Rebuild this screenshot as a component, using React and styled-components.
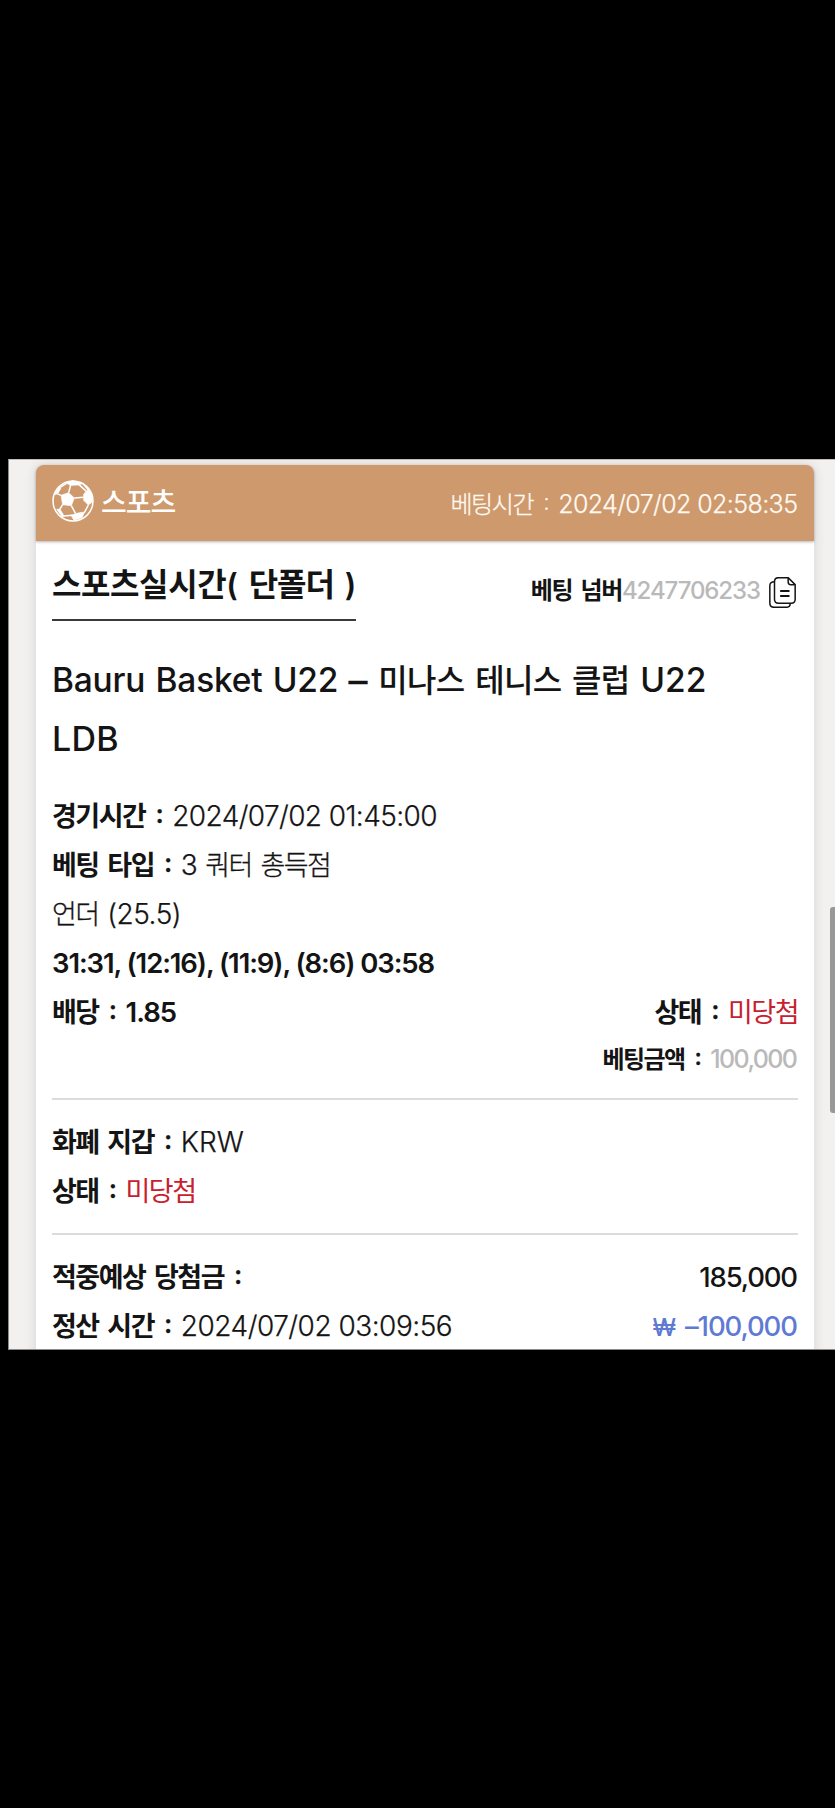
import React from "react";
import styled, { createGlobalStyle } from "styled-components";


const Ball = () => (
  <BallIcon viewBox="0 0 126 126">
    <circle cx="63" cy="63" r="60" fill="none" stroke="#fff" strokeWidth="4.5" />
    <g fill="#fff" stroke="#fff" strokeWidth="2" strokeLinejoin="round">
      <path d="M27 46 L50 38 L67 54 L58 77 L32 74 Z" />
      <path d="M40 8 L56 16 L81 15 L93 10 L63 2 Z" />
      <path d="M95 42 L107 31 L120 42 L121 66 L109 75 L95 61 Z" />
      <path d="M57 106 L78 99 L98 96 L90 113 L66 121 Z" />
      <path d="M9 39 L24 20 L26 26 L18 40 L10 44 Z" />
      <path d="M14 88 L24 88 L36 107 L32 113 Z" />
    </g>
    <g fill="none" stroke="#fff" strokeWidth="4.5">
      <path d="M50 38 L56 15 M67 54 L95 52 M58 77 L71 101 M32 74 L22 90 M27 46 L14 40" />
      <path d="M81 14 L104 35 M109 75 L97 98 M24 22 L44 10 M36 108 L60 106 M92 10 L116 38" />
    </g>
  </BallIcon>
)


const Copy = () => (
  <CopyIcon viewBox="0 0 80 93">
    <path d="M28 2 H57 L78 23 V67 C78 75 74 79 66 79 H28 C20 79 16 75 16 67 V14 C16 6 20 2 28 2 Z" />
    <path d="M57 3 V15 C57 20 60 23 65 23 H77" />
    <path d="M16 14 C6 14 2 18 2 26 V78 C2 87 6 91 15 91 H50 C59 91 63 88 63 80" />
    <path d="M33 42 H61 M33 57 H61" strokeWidth="6" />
  </CopyIcon>
)


const App = () => {
  return (
    <Page>
      <GlobalStyle />
      <Screen>
        <Card>
          <Header>
            <Sport>
              <Ball />
              <Ko size={28} weight={500} gap={-1}>스포츠</Ko>
            </Sport>
            <BetTime>
              <Thin size={24} gap={-1.4}>베팅시간</Thin>
              <Colon size={23} weight={300}>:</Colon>
              <En size={25} gap={-0.6}>2024/07/02 02:58:35</En>
            </BetTime>
          </Header>

          <Body>
            <TitleRow>
              <Title>
                <Ko size={32} gap={-0.4}>스포츠실시간</Ko>
                <En size={31} weight={600} word={3.5}>( </En>
                <Ko size={32} gap={-1}>단폴더</Ko>
                <En size={31} weight={600} word={3.5}> )</En>
              </Title>
              <BetNumber>
                <Ko size={24} gap={-1.3} word={4}>베팅 넘버</Ko>
                <Muted size={24} weight={500} gap={-1.1}>4247706233</Muted>
                <Copy />
              </BetNumber>
            </TitleRow>

            <Match>
              <En size={33.5} weight={500} word={1.5} gap={-0.2}>Bauru Basket U22 </En>
              <Dash>–</Dash>
              <Ko size={32} weight={500} gap={-0.7} word={4.2}> 미나스 테니스 클럽 </Ko>
              <En size={33.5} weight={500} gap={0}>U22</En>
              <br />
              <En size={34} weight={500} gap={0.3}>LDB</En>
            </Match>

            <Line>
              <span><Ko>경기시간</Ko><Colon>:</Colon><En gap={-0.6}>2024/07/02 01:45:00</En></span>
            </Line>
            <Line>
              <span><Ko>베팅 타입</Ko><Colon>:</Colon><En>3 </En><Thin>쿼터 총득점</Thin></span>
            </Line>
            <Line>
              <span><Thin>언더 </Thin><En>(25.5)</En></span>
            </Line>
            <Line>
              <span><En size={27.5} weight={600} gap={-1.1}>31:31, (12:16), (11:9), (8:6) 03:58</En></span>
            </Line>
            <Line>
              <span><Ko>배당</Ko><Colon>:</Colon><En size={27.5} weight={600} gap={-1}>1.85</En></span>
              <span><Ko>상태</Ko><Colon>:</Colon><Lose>미당첨</Lose></span>
            </Line>
            <Amount>
              <Ko size={24} gap={-1.6}>베팅금액</Ko><Colon size={23}>:</Colon>
              <Muted size={25} weight={500} gap={-1.6}>100,000</Muted>
            </Amount>

            <Divider />

            <Line>
              <span><Ko>화폐 지갑</Ko><Colon>:</Colon><En gap={0}>KRW</En></span>
            </Line>
            <Line>
              <span><Ko>상태</Ko><Colon>:</Colon><Lose>미당첨</Lose></span>
            </Line>

            <Divider />

            <Line>
              <span><Ko>적중예상 당첨금</Ko><Colon>:</Colon></span>
              <span><En size={27.5} weight={500} gap={-1.2}>185,000</En></span>
            </Line>
            <Line>
              <span><Ko>정산 시간</Ko><Colon>:</Colon><En gap={-0.5}>2024/07/02 03:09:56</En></span>
              <Blue>
                <En size={24} weight={500} word={3}>₩ </En>
                <En size={27.5} weight={500} gap={-1.1}>–100,000</En>
              </Blue>
            </Line>
          </Body>
        </Card>
        <ScrollThumb />
      </Screen>
    </Page>
  )
}


export default App


const GlobalStyle = createGlobalStyle`
  body {
    margin: 0;
    background: #000;
  }
`

const Page = styled.div`
  height: 1808px;
  padding: 459px 0 0 8px;
  box-sizing: border-box;
  background: #000;
  overflow: hidden;
`

const Screen = styled.div`
  position: relative;
  height: 891px;
  padding: 5px 21px 0 27px;
  box-sizing: border-box;
  border: 1px solid #8a8a89;
  border-top-color: #bebdbc;
  border-right: 0;
  background: #f2f1ef;
  overflow: hidden;
`

const Card = styled.div`
  height: 960px;
  border-radius: 8px;
  background: #fff;
  box-shadow: 0 0 12px rgba(40, 30, 50, .13);
`

const Header = styled.div`
  display: flex;
  justify-content: space-between;
  align-items: center;
  height: 76px;
  padding: 0 16px;
  box-sizing: border-box;
  border-radius: 8px 8px 0 0;
  background: #cd996d;
  box-shadow: 0 1px 3px rgba(0, 0, 0, .3);
  color: #fff;
`

const Sport = styled.div`
  display: flex;
  align-items: center;
  gap: 7px;
  padding-bottom: 4px;
`

const BallIcon = styled.svg`
  width: 42px;
  height: 42px;
`

const BetTime = styled.div`
  color: #fffaf2;
  line-height: 40px;
  padding-top: 10px;
`

// Latin and digits
const En = styled.span`
  font-family: Inter, "Liberation Sans", sans-serif;
  font-size: ${props => props.size || 28}px;
  font-weight: ${props => props.weight || 300};
  -webkit-text-stroke: ${props => props.weight ? 0 : .25}px;
  letter-spacing: ${props => props.gap ?? -0.45}px;
  margin-right: ${props => -(props.gap ?? -0.45)}px;
  word-spacing: ${props => props.word || 0}px;
  font-feature-settings: "calt" 0;
  line-height: 1;
  white-space: pre;
`

// Hangul
const Ko = styled.span`
  font-family: "Noto Sans CJK KR", sans-serif;
  font-size: ${props => props.size || 27}px;
  font-weight: ${props => props.weight || 700};
  letter-spacing: ${props => props.gap ?? -1.5}px;
  word-spacing: ${props => props.word ?? 4}px;
  line-height: 1;
  white-space: pre;
`

const Thin = styled(Ko)`
  font-weight: 300;
  -webkit-text-stroke: .3px;
`

const Colon = styled(En)`
  font-size: ${props => props.size || 26}px;
  font-weight: ${props => props.weight || 600};
  margin: 0 9px 0 10px;
  vertical-align: 3px;
`

const Dash = styled(En)`
  font-size: 38px;
  font-weight: 400;
  vertical-align: -2px;
`

const Muted = styled(En)`
  color: #b9b9b9;
`

const Lose = styled(Ko)`
  color: #c8202f;
  font-weight: 400;
`

const Blue = styled.span`
  color: #5f7ad3;
`

const Body = styled.div`
  padding: 18px 16px 0;
  color: #141414;
`

const TitleRow = styled.div`
  display: flex;
  justify-content: space-between;
  align-items: flex-start;
`

const Title = styled.div`
  height: 62px;
  line-height: 52px;
  padding-top: 6px;
  box-sizing: border-box;
  border-bottom: 2px solid #3a3a3a;
`

const BetNumber = styled.div`
  display: flex;
  align-items: baseline;
  padding: 18px 2px 0 0;
`

const CopyIcon = styled.svg`
  width: 27px;
  height: 31px;
  margin: 0 0 2px 8px;
  align-self: center;
  fill: none;
  stroke: #141414;
  stroke-width: 4.5;
`

const Match = styled.div`
  margin: 31px 0 22px;
  font-size: 33px;
  line-height: 59px;
  height: 118px;
`

const Line = styled.div`
  display: flex;
  justify-content: space-between;
  font-family: Inter, sans-serif;
  font-size: 28px;
  line-height: 49px;
  height: 49px;
`

const Amount = styled.div`
  text-align: right;
  height: 44px;
  line-height: 52px;
`

const Divider = styled.hr`
  height: 2px;
  border: 0;
  margin: 17px 0 18px;
  background: #dcdcdc;
`

const ScrollThumb = styled.div`
  position: absolute;
  right: 0;
  top: 447px;
  width: 5px;
  height: 206px;
  border-radius: 3px 0 0 3px;
  background: #999897;
`
